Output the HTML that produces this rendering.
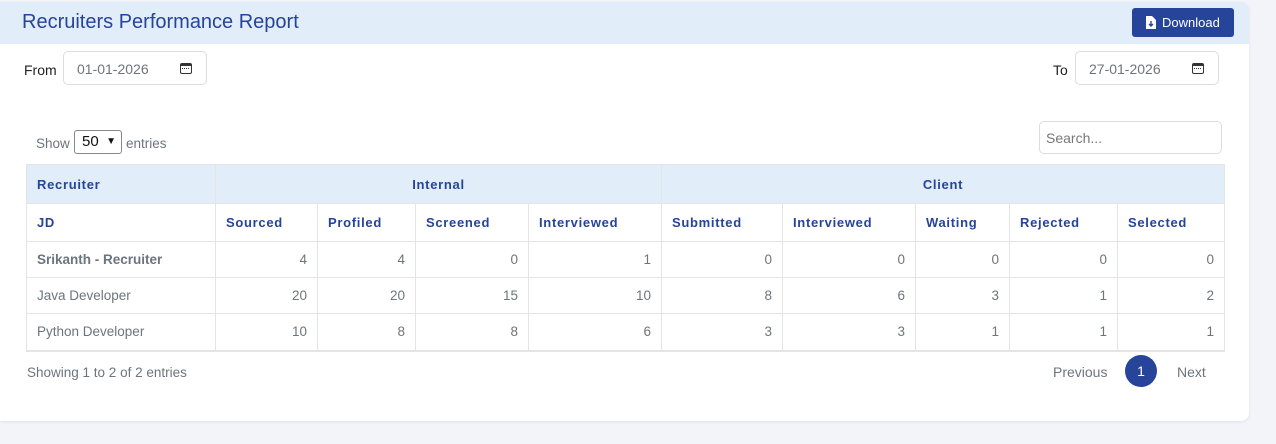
<!DOCTYPE html>
<html><head><style>
body{margin:0;width:1276px;height:444px;background:#f3f4f9;font-family:"Liberation Sans",sans-serif;position:relative;overflow:hidden}
.card{position:absolute;left:0;top:2px;width:1249px;height:419px;background:#fff;border-radius:0 8px 8px 0;box-shadow:0 1px 3px rgba(0,0,0,.08)}
.hdr{position:absolute;left:0;top:0;width:1249px;height:42px;background:#e1edf9;border-radius:0 8px 0 0}
.title{position:absolute;left:22px;top:9px;font-size:20px;color:#26449a}
.btn{position:absolute;left:1132px;top:6px;width:102px;height:29px;background:#26449a;border-radius:3px;color:#fff;font-size:13px;line-height:29px}
.lbl{position:absolute;font-size:14px;color:#222}
.inp{position:absolute;height:34px;border:1px solid #ddd;border-radius:5px;box-sizing:border-box;font-size:14px;color:#6c757d;line-height:34px;padding-left:13px}
.cal{position:absolute;right:14px;top:11px;width:12px;height:11px;border:1.5px solid #333;border-top-width:3px;border-radius:2px;box-sizing:border-box}
.cal:after{content:"";position:absolute;left:1px;top:2px;width:7px;height:2px;border-top:1.5px dotted #333}
table{position:absolute;left:26px;top:162px;border-collapse:collapse;table-layout:fixed;font-size:13.5px}
td,th{border:1px solid #e4e4e4;padding:0 10px;color:#6c757d}
th{color:#26449a;font-size:13px;letter-spacing:.7px;text-align:left}
td{text-align:right}
td:first-child{text-align:left}
</style></head><body>
<div class="card">
<div class="hdr"><div class="title">Recruiters Performance Report</div>
<div class="btn"><svg width="10" height="13" viewBox="0 0 10 13" style="position:absolute;left:14px;top:8px"><path d="M0 0H6L10 4V13H0Z" fill="#fff"/><path d="M5 5V10M3 8L5 10L7 8" stroke="#26449a" stroke-width="1.4" fill="none"/></svg><span style="position:absolute;left:30px">Download</span></div></div>
<div class="lbl" style="left:24px;top:60px">From</div>
<div class="inp" style="left:63px;top:49px;width:144px">01-01-2026<div class="cal"></div></div>
<div class="lbl" style="left:1053px;top:60px">To</div>
<div class="inp" style="left:1075px;top:49px;width:144px">27-01-2026<div class="cal"></div></div>
<div class="lbl" style="left:36px;top:134px;color:#6c757d;font-size:13.5px">Show</div>
<div style="position:absolute;left:74px;top:128px;width:48px;height:24px;border:1px solid #888;border-radius:3px;box-sizing:border-box;font-size:15px;line-height:22px;padding-left:7px;color:#111">50<span style="position:absolute;right:5px;top:0;font-size:10px">&#9660;</span></div>
<div class="lbl" style="left:126px;top:134px;color:#6c757d;font-size:13.5px">entries</div>
<div class="inp" style="left:1039px;top:119px;width:183px;height:33px;line-height:33px;padding-left:6px;color:#777">Search...</div>
<table>
<colgroup><col style="width:189px"><col style="width:102px"><col style="width:98px"><col style="width:113px"><col style="width:133px"><col style="width:121px"><col style="width:133px"><col style="width:94px"><col style="width:108px"><col style="width:107px"></colgroup>
<tr style="height:39px;background:#e1edf9"><th>Recruiter</th><th colspan="4" style="text-align:center">Internal</th><th colspan="5" style="text-align:center">Client</th></tr>
<tr style="height:38px"><th>JD</th><th>Sourced</th><th>Profiled</th><th>Screened</th><th>Interviewed</th><th>Submitted</th><th>Interviewed</th><th>Waiting</th><th>Rejected</th><th>Selected</th></tr>
<tr style="height:36px"><td style="font-weight:bold">Srikanth - Recruiter</td><td>4</td><td>4</td><td>0</td><td>1</td><td>0</td><td>0</td><td>0</td><td>0</td><td>0</td></tr>
<tr style="height:36px"><td>Java Developer</td><td>20</td><td>20</td><td>15</td><td>10</td><td>8</td><td>6</td><td>3</td><td>1</td><td>2</td></tr>
<tr style="height:37px;border-bottom:2px solid #e4e4e4"><td>Python Developer</td><td>10</td><td>8</td><td>8</td><td>6</td><td>3</td><td>3</td><td>1</td><td>1</td><td>1</td></tr>
</table>
<div class="lbl" style="left:27px;top:363px;color:#6c757d;font-size:13.5px">Showing 1 to 2 of 2 entries</div>
<div class="lbl" style="left:1053px;top:362px;color:#6c757d">Previous</div>
<div style="position:absolute;left:1125px;top:353px;width:32px;height:32px;border-radius:50%;background:#26449a;color:#fff;font-size:14px;text-align:center;line-height:32px">1</div>
<div class="lbl" style="left:1177px;top:362px;color:#6c757d">Next</div>
</div>
</body></html>
